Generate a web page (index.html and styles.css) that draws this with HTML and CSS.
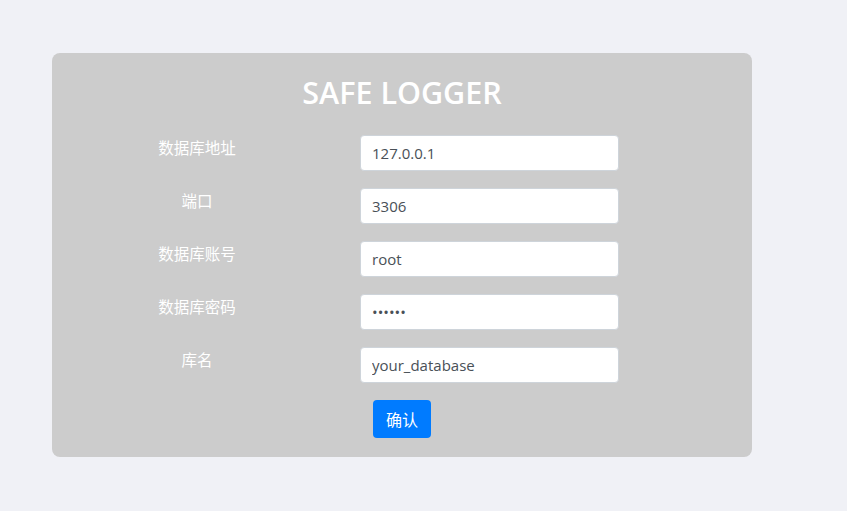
FILE: index.html
```html
<!DOCTYPE html>
<html lang="zh-CN">
<head>
<meta charset="utf-8">
<title>SAFE LOGGER</title>
<link rel="stylesheet" href="styles.css">
</head>
<body>
<div class="card">
  <h2 class="title">SAFE LOGGER</h2>
  <form class="form">
    <label class="label">数据库地址</label>
    <input class="input" type="text" value="127.0.0.1">
    <label class="label">端口</label>
    <input class="input" type="text" value="3306">
    <label class="label">数据库账号</label>
    <input class="input" type="text" value="root">
    <label class="label">数据库密码</label>
    <input class="input" type="password" value="123456">
    <label class="label">库名</label>
    <input class="input" type="text" value="your_database">
    <span></span>
    <div class="actions"><button class="btn" type="button">确认</button></div>
  </form>
</div>
</body>
</html>
```
FILE: styles.css
```css
html, body {
  margin: 0;
  padding: 0;
  background: #f0f1f6;
  font-family: "Open Sans", "Noto Sans CJK SC", sans-serif;
}
.card {
  margin: 53px 0 0 52px;
  width: 700px;
  height: 404px;
  box-sizing: border-box;
  background: #cccccc;
  border-radius: 8px;
  padding-top: 18px;
}
.title {
  margin: 0;
  text-align: center;
  color: #ffffff;
  font-size: 30.5px;
  font-weight: 600;
  line-height: 42px;
  letter-spacing: 0;
}
.form {
  margin: 22px 0 0 45px;
  display: grid;
  grid-template-columns: 200px 259px;
  column-gap: 63px;
  row-gap: 17px;
}
.label {
  color: #ffffff;
  font-family: "Noto Sans CJK SC", sans-serif;
  font-size: 15.5px;
  text-align: center;
  line-height: 24px;
  padding-top: 0;
}
.input {
  box-sizing: border-box;
  width: 259px;
  height: 36px;
  margin: 0;
  padding: 0 11px;
  border: 1px solid #ced4da;
  border-radius: 4px;
  background: #ffffff;
  color: #495057;
  font-family: "Open Sans", sans-serif;
  font-size: 15px;
  outline: none;
}
.actions {
  padding-left: 13px;
}
.btn {
  width: 58px;
  height: 38px;
  border: none;
  border-radius: 4px;
  background: #007bff;
  color: #ffffff;
  font-family: "Noto Sans CJK SC", sans-serif;
  font-size: 16px;
  padding: 0;
  cursor: pointer;
}
```
